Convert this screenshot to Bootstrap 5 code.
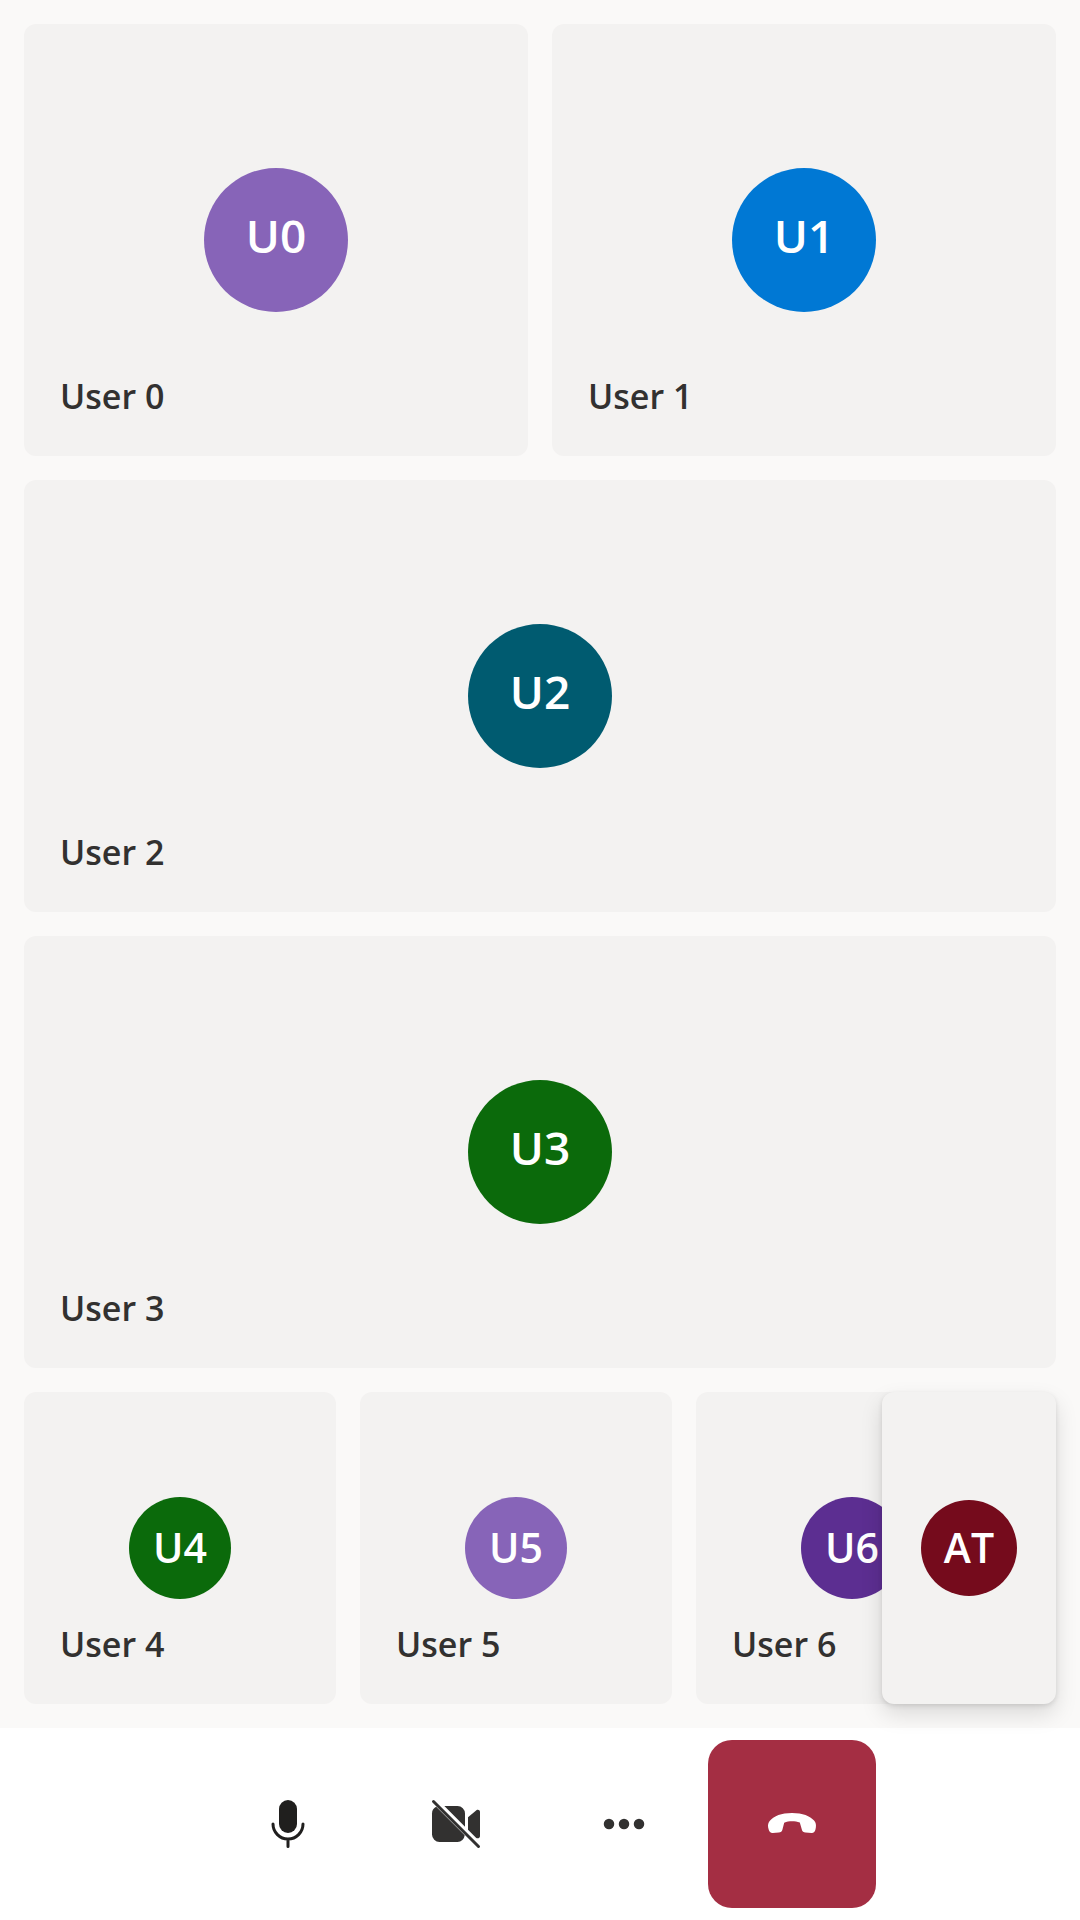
<!DOCTYPE html>
<html lang="en">
<head>
<meta charset="utf-8">
<meta name="viewport" content="width=device-width, initial-scale=1">
<title>Group call</title>
<link href="https://cdn.jsdelivr.net/npm/bootstrap@5.3.0/dist/css/bootstrap.min.css" rel="stylesheet">
<style>
  body { background: #faf9f8; color: #323130; font-family: "Open Sans", "Noto Sans", sans-serif; }
  .gallery { padding: 24px; gap: 24px; }
  .tile-row { gap: 24px; }
  .tile { display: grid; background: #f3f2f1; border-radius: 12px; }
  /* Avatar and name share the single grid cell */
  .tile > * { grid-area: 1 / 1; }
  .strip .tile { width: 312px; height: 312px; }
  .avatar { place-self: center; width: 144px; height: 144px; padding-bottom: 10px; font-size: 46px; line-height: 1; font-weight: 600; color: #fff; }
  .strip .avatar { width: 102px; height: 102px; padding-bottom: 2px; font-size: 41px; }
  .strip .self-tile .avatar { width: 96px; height: 96px; }
  .caption-name { place-self: end start; padding: 36px; font-size: 34px; line-height: 48px; font-weight: 600; }
  .strip .self-tile { width: 174px; box-shadow: 0 10px 22px rgba(0,0,0,.13), 0 2px 5px rgba(0,0,0,.11); z-index: 2; }
  .lilac { background: #8764b8; }
  .azure { background: #0078d4; }
  .petrol { background: #005b70; }
  .forest { background: #0b6a0b; }
  .violet { background: #5c2e91; }
  .wine { background: #750b1c; }
  .call-bar { background: #fff; padding: 12px; }
  .call-bar .btn { width: 168px; height: 168px; padding: 0; border: 0; border-radius: 24px; color: #323130; }
  .call-bar .btn-mic { color: #201f1e; }
  .call-bar .btn-hangup { background: #a42e43; color: #fff; }
  .call-bar svg { width: 60px; height: 60px; }
</style>
</head>
<body>
<div class="d-flex flex-column min-vh-100">
  <main class="gallery d-flex flex-column flex-grow-1">
    <div class="tile-row d-flex flex-fill">
      <section class="tile flex-fill">
        <div class="avatar lilac rounded-circle d-flex align-items-center justify-content-center">U0</div>
        <div class="caption-name">User 0</div>
      </section>
      <section class="tile flex-fill">
        <div class="avatar azure rounded-circle d-flex align-items-center justify-content-center">U1</div>
        <div class="caption-name">User 1</div>
      </section>
    </div>
    <div class="tile-row d-flex flex-fill">
      <section class="tile flex-fill">
        <div class="avatar petrol rounded-circle d-flex align-items-center justify-content-center">U2</div>
        <div class="caption-name">User 2</div>
      </section>
    </div>
    <div class="tile-row d-flex flex-fill">
      <section class="tile flex-fill">
        <div class="avatar forest rounded-circle d-flex align-items-center justify-content-center">U3</div>
        <div class="caption-name">User 3</div>
      </section>
    </div>
    <div class="strip tile-row d-flex position-relative">
      <section class="tile flex-shrink-0">
        <div class="avatar forest rounded-circle d-flex align-items-center justify-content-center">U4</div>
        <div class="caption-name">User 4</div>
      </section>
      <section class="tile flex-shrink-0">
        <div class="avatar lilac rounded-circle d-flex align-items-center justify-content-center">U5</div>
        <div class="caption-name">User 5</div>
      </section>
      <section class="tile flex-shrink-0">
        <div class="avatar violet rounded-circle d-flex align-items-center justify-content-center">U6</div>
        <div class="caption-name">User 6</div>
      </section>
      <section class="tile self-tile position-absolute top-0 end-0">
        <div class="avatar wine rounded-circle d-flex align-items-center justify-content-center">AT</div>
      </section>
    </div>
  </main>
  <footer class="call-bar d-flex justify-content-center">
    <button type="button" class="btn btn-mic d-flex align-items-center justify-content-center" aria-label="Mute">
      <svg viewBox="0 0 20 20" aria-hidden="true"><rect x="7" y="2" width="6" height="11" rx="3" fill="currentColor"/><path d="M5 10a5 5 0 0 0 10 0M10 15v2.5" fill="none" stroke="currentColor" stroke-linecap="round"/></svg>
    </button>
    <button type="button" class="btn d-flex align-items-center justify-content-center" aria-label="Turn camera on">
      <svg viewBox="0 0 20 20" aria-hidden="true" fill="currentColor"><path d="M2.5 2.5l15 15" stroke="currentColor" stroke-linecap="round"/><path d="M3.4 4.27L12.9 13.75A2.5 2.5 0 0 1 10.5 16h-6A2.5 2.5 0 0 1 2 13.5v-7a2.5 2.5 0 0 1 1.4-2.23z"/><path d="M6.12 4l6.88 6.88V6.5A2.5 2.5 0 0 0 10.5 4z"/><path d="M14 11.88l2.75 2.75c.55.3 1.25 0 1.25-.65V6c0-.6-.7-.95-1.2-.55L14 7.75z"/></svg>
    </button>
    <button type="button" class="btn d-flex align-items-center justify-content-center" aria-label="More options">
      <svg viewBox="0 0 20 20" aria-hidden="true" fill="currentColor"><circle cx="5" cy="10" r="1.75"/><circle cx="10" cy="10" r="1.75"/><circle cx="15" cy="10" r="1.75"/></svg>
    </button>
    <button type="button" class="btn btn-hangup d-flex align-items-center justify-content-center" aria-label="Leave call">
      <svg viewBox="0 0 20 20" aria-hidden="true" fill="currentColor"><path d="M10 6.3c3.6 0 6 1.05 7.35 2.5.6.65.75 1.45.6 2.35l-.15.8c-.15.7-.6 1.1-1.3 1.05l-2-.15c-.65-.05-1.05-.35-1.2-.95l-.7-2.4c-.8-.25-1.7-.4-2.6-.4s-1.8.15-2.6.45l-.6 2.35c-.15.6-.55.9-1.2.95l-2 .15c-.7.05-1.2-.35-1.35-1.05l-.2-.8c-.15-.9.05-1.7.65-2.35C4 7.35 6.4 6.3 10 6.3z"/></svg>
    </button>
  </footer>
</div>
<script src="https://cdn.jsdelivr.net/npm/bootstrap@5.3.0/dist/js/bootstrap.bundle.min.js"></script>
</body>
</html>
